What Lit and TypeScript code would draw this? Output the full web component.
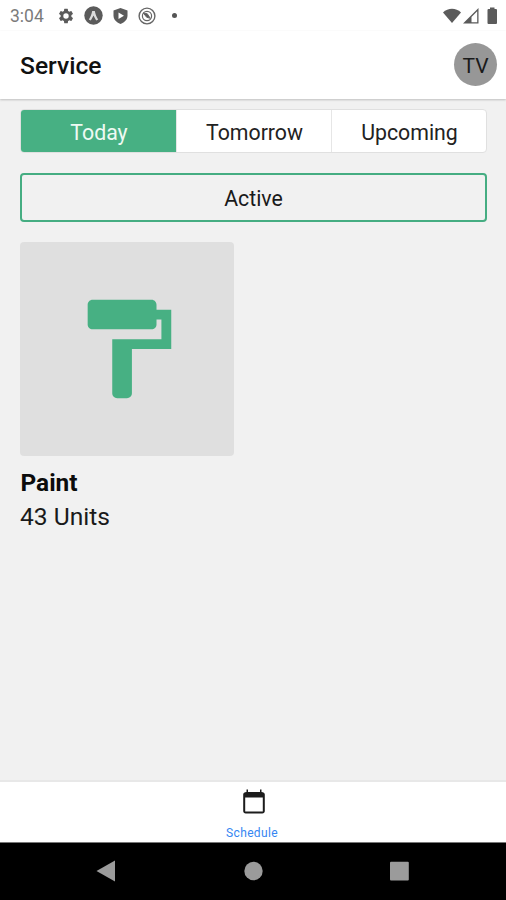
import { LitElement, html, css, svg } from "lit";
import { customElement, state } from "lit/decorators.js";
import { classMap } from "lit/directives/class-map.js";

const icons = {
  gear: svg`<path fill-rule="evenodd" d="M19.14 12.94c.04-.3.06-.61.06-.94s-.02-.64-.07-.94l2.03-1.58a.5.5 0 0 0 .12-.61l-1.92-3.32a.5.5 0 0 0-.59-.22l-2.39.96a7 7 0 0 0-1.62-.94l-.36-2.54a.5.5 0 0 0-.48-.41h-3.84a.5.5 0 0 0-.47.41l-.36 2.54a7.4 7.4 0 0 0-1.62.94l-2.39-.96a.5.5 0 0 0-.59.22L2.74 8.87a.5.5 0 0 0 .12.61l2.03 1.58a6 6 0 0 0 0 1.88l-2.03 1.58a.5.5 0 0 0-.12.61l1.92 3.32c.12.22.37.29.59.22l2.39-.96c.5.38 1.03.7 1.62.94l.36 2.54c.05.24.24.41.48.41h3.84c.24 0 .44-.17.47-.41l.36-2.54a7.4 7.4 0 0 0 1.62-.94l2.39.96c.22.08.47 0 .59-.22l1.92-3.32a.5.5 0 0 0-.12-.61zM12 15.6a3.600 3.600 0 1 1 0-7.200 3.600 3.600 0 0 1 0 7.200z"/>`,
};

@customElement("app-root")
export class AppRoot extends LitElement {
  @state() private selected = "Today";

  static styles = css`
    :host {
      display: flex;
      flex-direction: column;
      height: 900px;
      width: 506px;
      overflow: hidden;
      background: #f1f1f1;
      color: #1a1a1a;
      font-family: Roboto, "Liberation Sans", sans-serif;
    }
    svg { display: block; flex: none; }
    .status {
      height: 31px;
      flex: none;
      display: flex;
      align-items: center;
      background: #fff;
      color: #5b5b5b;
      fill: currentColor;
      padding: 0 8px 0 10px;
    }
    .clock { width: 47px; font-size: 17.5px; line-height: 20px; color: #7b7b7b; margin-top: 1px; }
    .left { display: flex; align-items: center; gap: 9px; }
    .dot { width: 5px; height: 5px; border-radius: 50%; background: #555; margin-left: 7px; }
    .right { display: flex; margin-left: auto; align-items: center; }
    .wifi { margin-right: 2px; }
    .signal { margin-right: 8px; }
    .header {
      height: 68px;
      flex: none;
      box-sizing: border-box;
      display: flex;
      align-items: center;
      justify-content: space-between;
      background: #fff;
      padding: 0 9px 0 20px;
      box-shadow: 0 1px 2px #bfbfbf;
    }
    .title { font-size: 24.6px; line-height: 28px; font-weight: 500; color: #111; padding-top: 2px; }
    .avatar {
      width: 43px;
      height: 43px;
      border-radius: 50%;
      background: #979797;
      font-size: 21px;
      line-height: 46px;
      text-align: center;
      margin-bottom: 1px;
    }
    .content { flex: 1; padding: 10px 19px 0 20px; }
    .tabs {
      display: grid;
      grid-template-columns: repeat(3, 1fr);
      height: 44px;
      box-sizing: border-box;
      border: 1px solid #e0e0e0;
      border-radius: 4px;
      background: #fff;
      overflow: hidden;
    }
    .tab {
      font: inherit;
      font-size: 21.3px;
      line-height: 42px;
      padding: 2px 0 0 1px;
      border: 0;
      border-left: 1px solid #e6e6e6;
      background: none;
      color: #222;
    }
    .tab:first-child { border-left: 0; }
    .tab.on { background: #47b083; color: #eefaf3; }
    .active {
      margin-top: 20px;
      height: 49px;
      box-sizing: border-box;
      border: 2px solid #45ad82;
      border-radius: 4px;
      font-size: 21.3px;
      line-height: 47px;
      text-align: center;
    }
    .tile {
      margin-top: 20px;
      width: 214px;
      height: 214px;
      border-radius: 4px;
      background: #dfdfdf;
      display: flex;
      align-items: center;
      justify-content: center;
      fill: #47b083;
    }
    .name { margin-top: 10px; padding-left: 0.5px; font-size: 24.4px; line-height: 34px; font-weight: 700; color: #0c0c0c; }
    .units { font-size: 24.600px; line-height: 33px; }
    .bottom {
      height: 62px;
      flex: none;
      box-sizing: border-box;
      display: flex;
      flex-direction: column;
      align-items: center;
      background: #fff;
      border-top: 2px solid #e8e8e8;
      padding: 7px 0 0 1px;
    }
    .label { font-size: 12px; line-height: 14px; color: #3586f2; margin-top: 11px; letter-spacing: 0.35px; margin-right: 3px; }
    .nav { height: 58px; flex: none; background: #000; border-top: 1px solid #777; box-sizing: border-box; display: flex; justify-content: center; }
  `;

  render() {
    return html`
      <div class="status">
        <span class="clock">3:04</span>
        <div class="left">
          <svg width="18" height="18" viewBox="0 0 24 24">${icons.gear}</svg>
          <svg width="19" height="19" viewBox="0 0 19 19">
            <circle cx="9.5" cy="9.5" r="9.2" />
            <path d="M4.800 13.500C6.600 11 7.600 8 8.200 5h2.600c.6 3 1.600 6 3.400 8.500l-2 .9c-1-1.300-1.900-3-2.700-4.800-.8 1.800-1.700 3.500-2.700 4.800z" fill="#dcdcdc" />
          </svg>
          <svg width="17" height="18" viewBox="0 0 17 18">
            <path d="M8.5 1l7 2.5v5c0 3.8-2.6 6.9-7 8.5-4.400-1.600-7-4.700-7-8.500v-5z" />
            <path d="M6.500 5.500l5.500 3.200-5.500 3.200z" fill="#fff" />
          </svg>
          <svg width="18" height="18" viewBox="0 0 18 18" fill="none" stroke="#666">
            <circle cx="9" cy="9" r="7.900" stroke-width="1.400" />
            <circle cx="9" cy="9" r="4.600" stroke-width="1.200" />
            <path d="M5.300 6l4 .8 3 4.500-3.600-1z" fill="#5b5b5b" stroke-width="1" />
          </svg>
          <span class="dot"></span>
        </div>
        <div class="right">
          <svg class="wifi" width="18" height="16" viewBox="0 0 18 16">
            <path d="M0 4.400C5-.5 13-.5 18 4.400L9 15z" />
          </svg>
          <svg class="signal" width="16" height="16" viewBox="0 0 16 16">
            <path d="M0 15.500L15.500 0v15.500zM8.500 14.300h5.700V3.200L8.500 9z" fill-rule="evenodd" />
          </svg>
          <svg width="11" height="17" viewBox="0 0 11 17">
            <path d="M3 .500h4.500v1.500H9q1 0 1 1v13q0 1-1 1H1.500q-1 0-1-1V3q0-1 1-1H3z" />
          </svg>
        </div>
      </div>
      <div class="header">
        <div class="title">Service</div>
        <div class="avatar">TV</div>
      </div>
      <div class="content">
        <div class="tabs">
          ${["Today", "Tomorrow", "Upcoming"].map(
            (t) => html`<button class=${classMap({ tab: true, on: t === this.selected })} @click=${() => (this.selected = t)}>${t}</button>`
          )}
        </div>
        <div class="active">Active</div>
        <div class="tile">
          <svg width="118" height="118" viewBox="0 0 24 24">
            <path d="M18 4V3c0-.55-.45-1-1-1H5c-.55 0-1 .45-1 1v4c0 .55.45 1 1 1h12c.55 0 1-.45 1-1V6h1v4H9v11c0 .55.45 1 1 1h2c.55 0 1-.45 1-1v-9h8V4h-3z" />
          </svg>
        </div>
        <div class="name">Paint</div>
        <div class="units">43 Units</div>
      </div>
      <div class="bottom">
        <svg width="24" height="26" viewBox="0 0 24 26">
          <path d="M4.500 .500H6V3h12V.500h1.500V3c2 0 3.300 1.100 3.300 2.500V22c0 1.400-1 2.500-2.500 2.500H3.700C2.200 24.500 1.200 23.400 1.200 22V5.500C1.200 4.100 2.500 3 4.500 3zM3.200 8.500v14h17.600v-14z" fill="#1c1c1c" fill-rule="evenodd" />
        </svg>
        <div class="label">Schedule</div>
      </div>
      <div class="nav">
        <svg width="506" height="57" viewBox="0 0 506 57" fill="#9b9b9b">
          <path d="M96.500 28L115 17.500v21z" />
          <circle cx="253.500" cy="28" r="9.200" />
          <rect x="390" y="18.800" width="18.800" height="18.800" rx="1" />
        </svg>
      </div>
    `;
  }
}
